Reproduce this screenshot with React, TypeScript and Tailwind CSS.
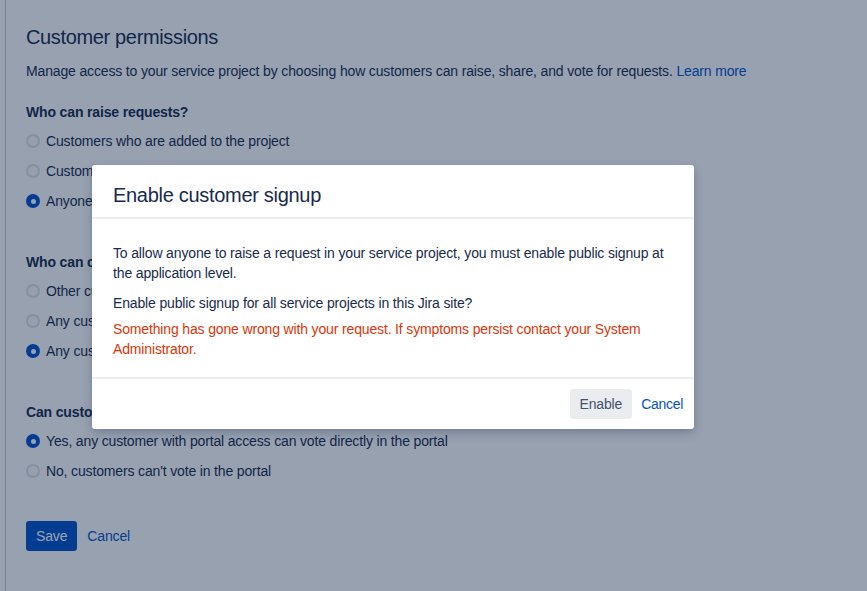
import React from 'react';

interface RadioProps {
  label: string;
  checked?: boolean;
}

function Radio({ label, checked }: RadioProps) {
  return (
    <label className="flex h-[30px] items-center gap-[6px] text-[14px] text-[#172B4D]">
      {checked ? (
        <span className="flex h-[14px] w-[14px] items-center justify-center rounded-full bg-[#0052CC]">
          <span className="h-[5px] w-[5px] rounded-full bg-white" />
        </span>
      ) : (
        <span className="h-[14px] w-[14px] rounded-full border-2 border-[#DFE1E6] bg-[#FAFBFC]" />
      )}
      <span>{label}</span>
    </label>
  );
}

function Group({ title, options, first }: { title: string; options: RadioProps[]; first?: boolean }) {
  return (
    <section className={first ? 'mt-[21px]' : 'mt-[36px]'}>
      <h3 className="text-[14px] font-bold leading-[20px] text-[#172B4D]">{title}</h3>
      <div className="mt-[4px] flex flex-col">
        {options.map((o) => (
          <Radio key={o.label} {...o} />
        ))}
      </div>
    </section>
  );
}

export default function App() {
  return (
    <div
      className="relative h-[591px] w-full overflow-hidden bg-white tracking-[-0.15px]"
      style={{ fontFamily: '"Liberation Sans", Arial, sans-serif' }}
    >
      {/* page underneath */}
      <div className="flex h-full">
        <div className="w-[5px] shrink-0" />
        <main className="flex-1 border-l border-[#C1C7D0] pl-[20px] pt-[23px]">
          <h2 className="text-[20px] leading-[28px] tracking-[-0.35px] text-[#172B4D]">Customer permissions</h2>
          <p className="mt-[10px] text-[14px] leading-[20px] text-[#172B4D]">
            Manage access to your service project by choosing how customers can raise, share, and vote for requests.{' '}
            <a className="text-[#0052CC]">Learn more</a>
          </p>

          <Group
            first
            title="Who can raise requests?"
            options={[
              { label: 'Customers who are added to the project' },
              { label: 'Customers who have an account on this Jira site' },
              { label: 'Anyone can email the service project or raise a request in the portal', checked: true },
            ]}
          />
          <Group
            title="Who can customers share requests with?"
            options={[
              { label: 'Other customers in their organizations' },
              { label: 'Any customer, by searching in the project' },
              { label: 'Any customer, by entering their email address', checked: true },
            ]}
          />
          <Group
            title="Can customers vote on requests?"
            options={[
              { label: 'Yes, any customer with portal access can vote directly in the portal', checked: true },
              { label: "No, customers can't vote in the portal" },
            ]}
          />

          <div className="mt-[35px] flex items-center gap-[10px]">
            <button className="h-[30px] rounded-[3px] bg-[#0052CC] px-[10px] text-[14px] text-white">Save</button>
            <a className="text-[14px] text-[#0052CC]">Cancel</a>
          </div>
        </main>
      </div>

      {/* blanket */}
      <div className="absolute inset-0 bg-[rgba(9,30,66,0.42)]" />

      {/* dialog */}
      <div className="absolute left-[92px] top-[165px] w-[602px] rounded-[3px] bg-white shadow-[0_4px_10px_rgba(9,30,66,0.25)]">
        <header className="flex h-[54px] items-center border-b-2 border-[#EBECF0] px-[21px] pt-[7px]">
          <h1 className="text-[20px] leading-[28px] tracking-[-0.3px] text-[#172B4D]">Enable customer signup</h1>
        </header>
        <div className="px-[21px] pb-[18px] pt-[24px] text-[14px] leading-[20px] text-[#172B4D]">
          <p>
            To allow anyone to raise a request in your service project, you must enable public signup at the
            application level.
          </p>
          <p className="mt-[10px]">Enable public signup for all service projects in this Jira site?</p>
          <p className="mt-[6px] text-[#DE350B]">
            Something has gone wrong with your request. If symptoms persist contact your System Administrator.
          </p>
        </div>
        <footer className="flex h-[52px] items-center justify-end gap-[9px] border-t-2 border-[#EBECF0] pr-[11px]">
          <button className="h-[30px] rounded-[3px] bg-[#EBECF0] px-[10px] text-[14px] text-[#42526E]">Enable</button>
          <a className="tracking-[-0.3px] text-[14px] text-[#0052CC]">Cancel</a>
        </footer>
      </div>
    </div>
  );
}
